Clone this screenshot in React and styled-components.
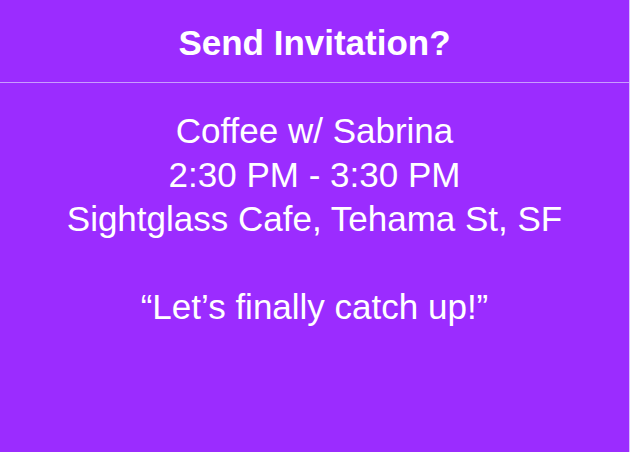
import React from "react";
import styled, { createGlobalStyle } from "styled-components";

const GlobalStyle = createGlobalStyle`
  html, body {
    margin: 0;
    padding: 0;
    background: #9b2cff;
  }
  body {
    font-family: "Liberation Sans", Arial, Helvetica, sans-serif;
  }
`;

const Dialog = styled.div`
  width: 630px;
  height: 452px;
  box-sizing: border-box;
  background: #9b2cff;
  border-right: 1px solid #d9bcff;
  color: #ffffff;
  display: flex;
  flex-direction: column;
`;

const Header = styled.div`
  height: 83px;
  box-sizing: border-box;
  padding-top: 22px;
  border-bottom: 1px solid #c99cff;
  text-align: center;
`;

const Title = styled.h1`
  margin: 0;
  font-size: 35px;
  line-height: 41px;
  font-weight: bold;
`;

const Body = styled.div`
  padding-top: 26px;
  text-align: center;
`;

const Line = styled.p`
  margin: 0;
  font-size: 35px;
  line-height: 44px;
  min-height: 44px;
  white-space: nowrap;
`;

const details = [
  "Coffee w/ Sabrina",
  "2:30 PM - 3:30 PM",
  "Sightglass Cafe, Tehama St, SF",
  "",
  "\u201CLet\u2019s finally catch up!\u201D",
];

export default function App() {
  return (
    <>
      <GlobalStyle />
      <Dialog>
        <Header>
          <Title>Send Invitation?</Title>
        </Header>
        <Body>
          {details.map((text, i) => (
            <Line key={i}>{text}</Line>
          ))}
        </Body>
      </Dialog>
    </>
  );
}
